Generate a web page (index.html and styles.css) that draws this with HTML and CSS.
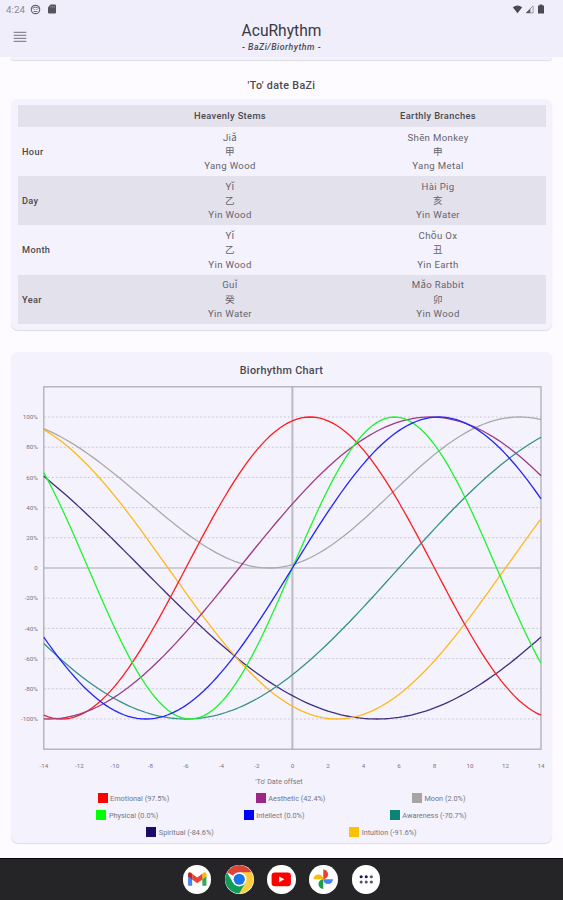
FILE: index.html
```html
<!DOCTYPE html>
<html lang="en">
<head>
<meta charset="utf-8">
<title>AcuRhythm</title>
<link rel="stylesheet" href="styles.css">
</head>
<body>
<header class="appbar">
  <div class="status">
    <div class="status-side">
      <span class="clock">4:24</span>
      <svg class="face" viewBox="0 0 12 12"><circle cx="6" cy="6" r="4.6" fill="none" stroke="#66656d" stroke-width="1.3"/><path d="M2.6 4.6 6 3.5l3.4 1.1M4 6h1M7 6h1M4 8.2h4" fill="none" stroke="#66656d" stroke-width="1"/></svg>
      <svg class="sd" viewBox="0 0 10 10"><path d="M3.6.6H8q1 0 1 1v7q0 1-1 1H2q-1 0-1-1V3.3z" fill="#55545c"/><path d="M4 2v1.6M5.7 2v1.6M7.4 2v1.6" stroke="#aaa9b2" stroke-width=".7"/></svg>
    </div>
    <div class="status-side">
      <svg class="wifi" viewBox="0 0 12 10"><path d="M.8 2.5Q6-1.3 11.2 2.5L6 9.3z" fill="#4b4a52"/></svg>
      <svg class="cell" viewBox="0 0 10 10"><path d="M9 1v7.8H1.2z" fill="none" stroke="#8b8a94" stroke-width=".9"/><path d="M6 4v5H1z" fill="#5d5c65"/></svg>
      <svg class="battery" viewBox="0 0 8 10"><path d="M2.7.5h2.6v1H7v8H1v-8h1.7z" fill="#4b4a52"/></svg>
    </div>
  </div>
  <div class="titlebar">
    <svg class="menu" viewBox="0 0 14 12"><path d="M.7 1.4h12.6M.7 4.4h12.6M.7 7.4h12.6M.7 10.4h12.6" stroke="#8b8a94" stroke-width="1.2"/></svg>
    <div class="titles">
      <h1>AcuRhythm</h1>
      <p>- BaZi/Biorhythm -</p>
    </div>
    <span class="spacer"></span>
  </div>
</header>
<main>
  <div class="card card-tail"></div>
  <h2 class="section-title">'To' date BaZi</h2>
  <section class="card bazi">
    <div class="row head"><span></span><span>Heavenly Stems</span><span>Earthly Branches</span></div>
    <div class="row"><b>Hour</b><span>Jiǎ<br>甲<br>Yang Wood</span><span>Shēn Monkey<br>申<br>Yang Metal</span></div>
    <div class="row shade"><b>Day</b><span>Yǐ<br>乙<br>Yin Wood</span><span>Hài Pig<br>亥<br>Yin Water</span></div>
    <div class="row"><b>Month</b><span>Yǐ<br>乙<br>Yin Wood</span><span>Chǒu Ox<br>丑<br>Yin Earth</span></div>
    <div class="row shade"><b>Year</b><span>Guǐ<br>癸<br>Yin Water</span><span>Mǎo Rabbit<br>卯<br>Yin Wood</span></div>
  </section>
  <section class="card chart-card">
    <h2 class="chart-title">Biorhythm Chart</h2>
    <svg id="chart" class="chart" viewBox="0 0 541 393"></svg>
    <p class="axis-title">'To' Date offset</p>
    <div class="legend">
      <span><i class="emotional"></i>Emotional (97.5%)</span>
      <span><i class="aesthetic"></i>Aesthetic (42.4%)</span>
      <span><i class="moon"></i>Moon (2.0%)</span>
    </div>
    <div class="legend">
      <span><i class="physical"></i>Physical (0.0%)</span>
      <span><i class="intellect"></i>Intellect (0.0%)</span>
      <span><i class="awareness"></i>Awareness (-70.7%)</span>
    </div>
    <div class="legend">
      <span><i class="spiritual"></i>Spiritual (-84.6%)</span>
      <span><i class="intuition"></i>Intuition (-91.6%)</span>
    </div>
  </section>
</main>
<nav class="dock">
  <span class="app"><svg viewBox="0 0 28 28"><path d="M5 9.5v11h4v-8.2z" fill="#4285f4"/><path d="M23 9.500v11h-4v-8.200z" fill="#34a853"/><path d="M19 8.500v5.700l4-3V9q0-2.500-2.500-1.700z" fill="#fbbc04"/><path d="M9 8.500v5.700l-4-3V9q0-2.500 2.500-1.700z" fill="#c5221f"/><path d="M9 8.500l5 3.800 5-3.800v5.700L14 18l-5-3.800z" fill="#ea4335"/></svg></span>
  <span class="app"><svg viewBox="0 0 28 28"><path d="M14 14 1.900 7A14 14 0 0 1 26.100 7z" fill="#db4437"/><path d="M14 7h12.100A14 14 0 0 1 14 28l6.060-10.500z" fill="#ffcd40"/><path d="M1.900 7A14 14 0 0 0 14 28l6.060-10.500L14 14 7.940 17.500z" fill="#0f9d58"/><circle cx="14" cy="14" r="7" fill="#fff"/><circle cx="14" cy="14" r="5.500" fill="#1a73e8"/></svg></span>
  <span class="app"><svg viewBox="0 0 28 28"><rect x="4.500" y="7.300" width="19" height="13.500" rx="3.200" fill="#f00"/><path d="M12 11.200v5.700l5-2.850z" fill="#fff"/></svg></span>
  <span class="app"><svg viewBox="0 0 28 28"><path d="M14 14V4.500A4.750 4.750 0 0 1 14 14z" fill="#ea4335"/><path d="M14 14h9.500A4.750 4.750 0 0 1 14 14z" fill="#4285f4"/><path d="M14 14v9.500A4.750 4.750 0 0 1 14 14z" fill="#1e9e4a"/><path d="M14 14H4.500A4.750 4.750 0 0 1 14 14z" fill="#fbbc04"/></svg></span>
  <span class="app"><svg viewBox="0 0 28 28"><g fill="#1b1464"><circle cx="9" cy="11.500" r="1.500"/><circle cx="14" cy="11.500" r="1.500"/></g><g fill="#55546c"><circle cx="19" cy="11.500" r="1.500"/><circle cx="9" cy="16.700" r="1.500"/><circle cx="14" cy="16.700" r="1.500"/><circle cx="19" cy="16.700" r="1.500"/></g></svg></span>
</nav>
<script src="chart.js"></script>
</body>
</html>
```
FILE: styles.css
```css
* { box-sizing: border-box; }
body {
  margin: 0;
  height: 900px;
  overflow: hidden;
  display: flex;
  flex-direction: column;
  background: #fdfbff;
  color: #4a4951;
  font-family: Roboto, "Noto Sans CJK SC", sans-serif;
}
h1, h2, p { margin: 0; font-weight: 400; }
svg { display: block; }

.appbar { height: 57px; background: #f0eefb; flex: none; }
.status {
  height: 18px;
  padding: 0 18px 0 6px;
  display: flex;
  justify-content: space-between;
  align-items: center;
}
.status-side { display: flex; align-items: center; }
.clock { font-size: 9.800px; color: #8b8a92; width: 24px; }
.face { width: 11px; height: 11px; }
.sd { width: 10px; height: 10px; margin-left: 6px; }
.wifi { width: 11px; height: 9px; }
.cell { width: 9px; height: 9px; margin-left: 2px; }
.battery { width: 8px; height: 10px; margin-left: 3px; }
.titlebar {
  height: 39px;
  padding: 0 13px;
  display: flex;
  justify-content: space-between;
}
.menu { width: 14px; height: 12px; margin-top: 12.500px; }
.spacer { width: 14px; }
.titles { text-align: center; }
.titles h1 { font-size: 15.600px; line-height: 18px; margin-top: 4px; letter-spacing: 0; color: #3a3941; }
.titles p { font-size: 8.800px; line-height: 12px; font-weight: 500; font-style: italic; letter-spacing: .5px; margin-top: 1px; }

main { flex: 1; padding: 0 11px; }
.card {
  background: #f4f2fc;
  border-radius: 7px;
  box-shadow: 0 1px 1px #dddbe5;
}
.card-tail { height: 3px; border-radius: 0 0 7px 7px; }
.section-title {
  height: 39px;
  padding-top: 18px;
  font-size: 10.700px;
  line-height: 16px;
  font-weight: 500;
  letter-spacing: .35px;
  text-align: center;
}
.bazi { height: 231px; padding: 6px 6.500px 0 7px; }
.row {
  height: 49.200px;
  display: grid;
  grid-template-columns: 108px 208px 208px;
  align-items: center;
  text-align: center;
  padding-top: 1px;
  font-size: 9.600px;
  line-height: 14.200px;
  letter-spacing: .35px;
  color: #65646d;
}
.row b { font-weight: 500; font-size: 9.200px; text-align: left; padding-left: 4px; color: #4a4951; }
.head { height: 22px; padding-top: 0; font-weight: 500; font-size: 9.300px; color: #4a4951; }
.head, .shade { background: #e3e1ec; }

.chart-card { margin-top: 22px; height: 491px; }
.chart-title {
  padding-top: 11px;
  font-size: 10.800px;
  line-height: 16px;
  height: 26px;
  font-weight: 500;
  letter-spacing: .3px;
  text-align: center;
}
.chart { width: 541px; height: 393px; }
.grid { stroke: #cac8d2; stroke-width: 1; stroke-dasharray: 2 2; }
.frame { fill: none; stroke: #a9a8b1; stroke-width: 1.200; }
.zero { stroke: #a9a8b1; stroke-width: 1.200; }
.now { stroke: #bcbac5; stroke-width: 2; }
.tick { font-size: 6.200px; fill: #777680; }
.curve { fill: none; stroke-width: 1.300; }
.axis-title { height: 18.500px; padding-top: 5.500px; font-size: 7.200px; line-height: 10px; color: #777680; text-align: center; margin-right: 5px; }
.legend {
  height: 17px;
  display: flex;
  justify-content: space-evenly;
  align-items: center;
  font-size: 7.300px;
  color: #777680;
}
.legend span { display: flex; align-items: center; gap: 2.500px; }
.legend i { width: 10px; height: 10px; }
.emotional { background: #f00; }
.aesthetic { background: #a02486; }
.moon { background: #a5a5a5; }
.physical { background: #0f0; }
.intellect { background: #00f; }
.awareness { background: #0b8478; }
.spiritual { background: #1b0c6b; }
.intuition { background: #ffc000; }

.dock {
  height: 42px;
  flex: none;
  background: #252528;
  border-top: 1px solid #08080a;
  display: flex;
  justify-content: center;
  align-items: center;
  gap: 13.700px;
}
.app { width: 28.500px; height: 28.500px; border-radius: 50%; background: #fff; overflow: hidden; }
.app svg { width: 100%; height: 100%; }
```
FILE: chart.js
```js
const svg = document.getElementById("chart");
const LEFT = 32.8, RIGHT = 530, TOP = 8.800, BOTTOM = 371.200;
const px = d => LEFT + (d + 14) * (RIGHT - LEFT) / 28;
const py = v => (TOP + BOTTOM) / 2 - v * (BOTTOM - TOP) / 2.4;

function add(name, attrs, text) {
  const el = document.createElementNS("http://www.w3.org/2000/svg", name);
  for (const key in attrs) el.setAttribute(key, attrs[key]);
  if (text !== undefined) el.textContent = text;
  svg.appendChild(el);
}

for (let p = -100; p <= 100; p += 20) {
  const y = py(p / 100);
  add("line", { class: p ? "grid" : "zero", x1: LEFT, x2: RIGHT, y1: y, y2: y });
  add("text", { class: "tick", x: LEFT - 6, y: y + 2.2, "text-anchor": "end" }, p ? p + "%" : "0");
}
for (let d = -14; d <= 14; d += 2) {
  add("text", { class: "tick", x: px(d), y: BOTTOM + 18.500, "text-anchor": "middle" }, d);
}
add("line", { class: "now", x1: px(0), x2: px(0), y1: TOP, y2: BOTTOM });
add("rect", { class: "frame", x: LEFT, y: TOP, width: RIGHT - LEFT, height: BOTTOM - TOP });

const cycle = (period, shift) => d => Math.sin(2 * Math.PI * (d + shift) / period);
const moon = d => {
  const t = d + 1.3;
  const degrees = t < 0 ? t * (12.65 + 0.08 * t) : t * (13.2 - 0.03 * t);
  return (1 - Math.cos(degrees * Math.PI / 180)) / 2;
};

const curves = [
  ["#a9a9ac", moon],
  ["#3b2e80", cycle(53, 35)],
  ["#ffb81c", cycle(38, 26)],
  ["#37908b", cycle(48, -6)],
  ["#ff1c1c", cycle(28, 6)],
  ["#9c3c85", cycle(43, 3)],
  ["#1cf52c", cycle(23, 0)],
  ["#2424fa", cycle(33, 0)]
];
for (const [color, f] of curves) {
  const points = [];
  for (let d = -14; d <= 14; d += 0.25) points.push(px(d).toFixed(2) + "," + py(f(d)).toFixed(2));
  add("polyline", { class: "curve", stroke: color, points: points.join(" ") });
}
```
